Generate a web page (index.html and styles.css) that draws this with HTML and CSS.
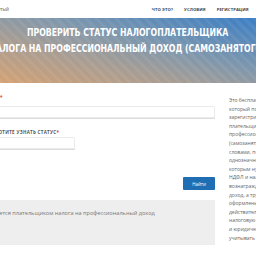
FILE: index.html
```html
<!DOCTYPE html>
<html lang="ru">
<head>
  <meta charset="UTF-8">
  <meta name="viewport" content="width=device-width, initial-scale=1.0">
  <title>Проверить статус самозанятого</title>
  <link rel="stylesheet" href="styles.css">
</head>
<body>

  <!-- Header -->
  <div class="header">
    <div class="logo">Самозанятый</div>
    <div class="nav">
      <a href="#">Что это?</a>
      <a href="#">Условия</a>
      <a href="#">Регистрация</a>
      <a href="#">Вопросы</a>
    </div>
  </div>

  <!-- Hero -->
  <div class="hero">
    <h1>Проверить статус налогоплательщика<br>налога на профессиональный доход (самозанятого)</h1>
  </div>

  <div class="main">
    <!-- Form -->
    <div class="form-col">
      <label class="label label-inn">ИНН самозанятого<span class="req">*</span></label>
      <input type="text" class="field field-inn">

      <label class="label label-date">Дата, на которую хотите узнать статус<span class="req">*</span></label>
      <input type="text" class="field field-date">

      <div class="actions">
        <button class="btn">Найти</button>
      </div>

      <div class="result">Не является плательщиком налога на профессиональный доход</div>
    </div>

    <!-- Info -->
    <div class="info-col">
      <p>Это бесплатный сервис,<br>
      который позволяет узнать,<br>
      зарегистрирован ли человек<br>
      плательщиком налога на<br>
      профессиональный доход<br>
      (самозанятым). Другими<br>
      словами, позволяет<br>
      однозначно определить, с<br>
      которым нужно платить<br>
      НДФЛ и налог на<br>
      вознаграждения. Если<br>
      доход, а трудовые<br>
      оформлены, возможно<br>
      действительности<br>
      налоговую инспекцию<br>
      и юридическое лицо<br>
      учитывать риски.</p>
    </div>
  </div>

</body>
</html>
```

FILE: styles.css
```css
body { margin: 0; width: 256px; overflow: hidden; background: #fff; font-family: "Open Sans", Arial, sans-serif; }

.header { height: 18px; display: flex; align-items: center; white-space: nowrap; }
.logo { flex-shrink: 0; margin-left: -21px; font-size: 4.5px; color: #555; }
.nav { display: flex; gap: 11px; margin-left: 143px; flex-shrink: 0; }
.nav a { font-size: 4.2px; font-weight: 700; color: #444; text-decoration: none; text-transform: uppercase; letter-spacing: 0.1px; }

.hero {
  height: 65px;
  padding-top: 7px;
  box-sizing: border-box;
  display: flex;
  justify-content: center;
  background:
    repeating-linear-gradient(45deg, rgba(255,255,255,0.06) 0 3px, rgba(255,255,255,0) 3px 7px),
    linear-gradient(to top right, #d3a174 0%, #a79d94 35%, #7e97ad 60%, #3b7ec4 100%);
}
.hero h1 { flex-shrink: 0; margin: 0; color: #fff; font-family: "DejaVu Sans Condensed", "Liberation Sans Narrow", Roboto, sans-serif; font-stretch: condensed; font-weight: 700; font-size: 10px; line-height: 16px; text-align: center; text-transform: uppercase; white-space: nowrap; transform: scaleX(0.865); }

.main { display: flex; padding-top: 11px; }
.form-col { flex-shrink: 0; width: 270px; margin-left: -55px; display: flex; flex-direction: column; }
.info-col { flex-shrink: 0; width: 80px; margin-left: 14px; padding-top: 2px; }

.label { display: block; font-size: 4.5px; line-height: 6px; font-weight: 700; color: #555; text-transform: uppercase; letter-spacing: 0.3px; white-space: nowrap; }
.label .req { color: #e53935; }
.label-date { margin-top: 11px; margin-left: -2px; }

.field { display: block; box-sizing: border-box; height: 12px; margin: 0; padding: 0 4px; border: 1px solid #ebebeb; border-radius: 1px; box-shadow: 0 1px 0 #dcdcdc; background: #fff; }
.field-inn { width: 100%; margin-top: 6px; }
.field-date { width: 130px; margin-top: 2px; }

.actions { display: flex; justify-content: flex-end; margin-top: 28px; }
.btn { width: 32px; height: 13px; padding: 0; border: none; border-radius: 1px; background: #1f6db3; color: #fff; font-family: "Open Sans", Arial, sans-serif; font-size: 4.5px; cursor: pointer; }

.result { margin-top: 10px; height: 45px; box-sizing: border-box; padding: 10px 0 0 33px; background: #eeeeee; color: #777; font-size: 5.6px; line-height: 6px; white-space: nowrap; }

.info-col p { margin: 0; font-size: 5px; line-height: 8.6px; color: #666; white-space: nowrap; }
```
